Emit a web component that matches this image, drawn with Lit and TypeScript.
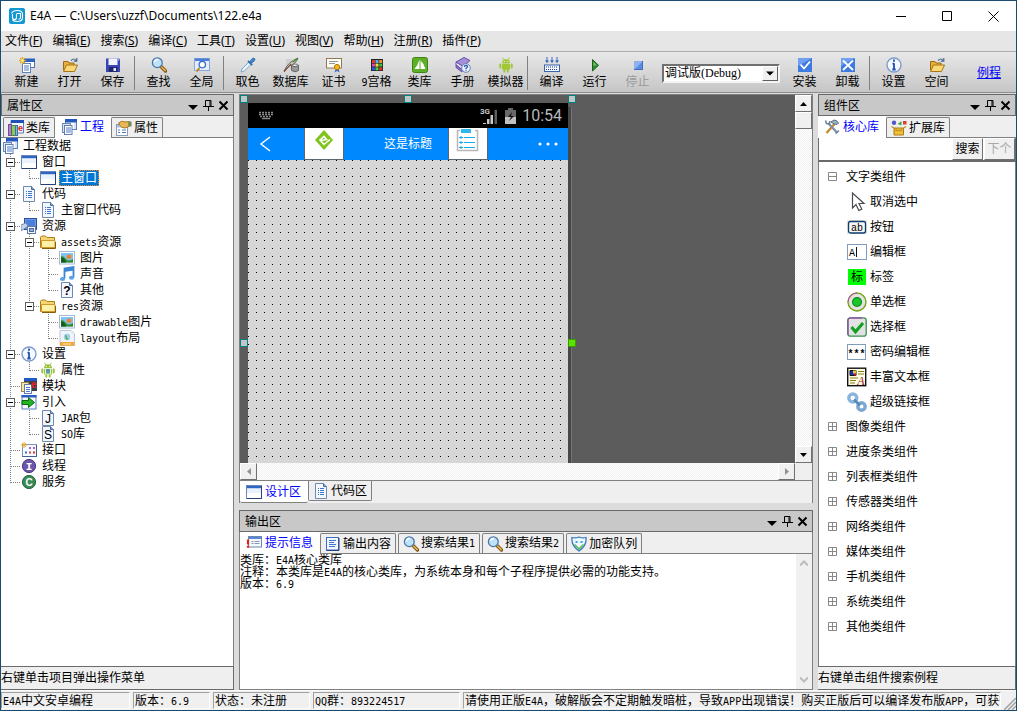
import { LitElement, html, svg, css, nothing, type TemplateResult } from "lit";
import { customElement, property } from "lit/decorators.js";

/* ---------- shared drawing helpers ---------- */

const pageSheet = svg`<path d="M2.500 .5h8l3 3v12h-11z" fill="#f3f8ff" stroke="#7089b0"/><path d="M10.500 .5v3h3" fill="#8fa8d0" stroke="#4c6aa0"/>`;
const windowPane = svg`<rect x=".5" y="1.500" width="15" height="13" fill="#fff" stroke="#6b87b8"/><path d="M1 2h14v2.500H1z" fill="#2f66c4"/><path d="M1 4.500h14V9H1z" fill="#e9f1fd"/><path d="M1 14.500h14.500V2" fill="none" stroke="#27407a"/>`;
const magnifier = svg`<path d="M10 9.500l4.500 4.500" stroke="#7a4a10" stroke-width="3.400" stroke-linecap="round"/><path d="M10.500 10l3.700 3.600" stroke="#e8b850" stroke-width="1.600" stroke-linecap="round"/><circle cx="6.300" cy="5.700" r="4.900" fill="#bfe2fb" stroke="#4a77a8" stroke-width="1.300"/><path d="M3.500 5a3.200 3.200 0 0 1 3.500-2.500" stroke="#fff" stroke-width="1.500" fill="none"/>`;
const folder = svg`<path d="M.5 13.500v-10l1-1.500h4l1.500 1.500h7.500v10z" fill="#f5d571" stroke="#b07c14"/><path d="M1.500 13.500V6.500h13.500v7z" fill="#fff0a8" stroke="#d09a28"/><path d="M2 14.500h13.500V8" fill="none" stroke="#8a5c08"/>`;
const folderOpen = svg`<path d="M1.500 13V4.500h4.500l1 1.500h5v2.500" fill="#e6b040" stroke="#9c6a10"/><path d="M1.500 14.500l3-6.500h11l-3 6.500z" fill="#fbd877" stroke="#a87414"/><path d="M9 3.500q3-3 5 0M14.800 1v3.200h-3" fill="none" stroke="#4a6a94" stroke-width="1.200"/>`;
const infoDisc = svg`<circle cx="8" cy="8" r="7" fill="#f4f8ff" stroke="#7f9cc9" stroke-width="1.400"/><path d="M8 2.600v2.200M8 6.200v6M6.500 6.700H8M6.300 12.500h3.400" stroke="#1d4fb0" stroke-width="1.800" fill="none"/>`;
const projectStack = svg`<rect x="4.500" y=".5" width="11" height="10" fill="#fff" stroke="#5c7fbe"/><path d="M4 0h12v3.500H4z" fill="#2256c0"/><path d="M13 4h2v6h-2z" fill="#d5e2f8"/><rect x="1.500" y="4.500" width="8" height="9" fill="#d8e5fa" stroke="#7089b0"/><rect x="3.500" y="6.500" width="7.500" height="9" fill="#fff" stroke="#5f7db0"/><path d="M5 9h5M5 11h5M5 13h5" stroke="#4d79cc"/>`;
const picture = svg`<rect x=".5" y="1.500" width="15" height="12.500" fill="#fff" stroke="#a5b9d6"/><path d="M2 3h12v9.500H2z" fill="#7fc4ef"/><path d="M2 6q3 0 5 3t7 0v3.500H2z" fill="#2e8b30"/><path d="M2 8q3-1 5 4.500H2z" fill="#175a20"/><circle cx="10" cy="6.800" r="2.400" fill="#f08030"/>`;
const droid = (body: string) => svg`<path d="M4 6.200a4 4 0 0 1 8 0z" fill="${body}"/><path d="M4.500 .8l1.500 2M11.500 .8l-1.500 2" stroke="${body}"/><rect x="4" y="6.800" width="8" height="6" rx=".8" fill="${body}"/><rect x="1.300" y="6.500" width="2" height="5" rx="1" fill="${body}"/><rect x="12.700" y="6.500" width="2" height="5" rx="1" fill="${body}"/><path d="M6.300 12v3.500M9.700 12v3.500" stroke="${body}" stroke-width="1.900"/><circle cx="6.300" cy="4.500" r=".6" fill="#fff"/><circle cx="9.700" cy="4.500" r=".6" fill="#fff"/>`;
const docLines = svg`${pageSheet}<path d="M5 5.500h1M7 5.500h4M5 7.500h1M7 7.500h4M5 9.500h1M7 9.500h4M5 11.500h1M7 11.500h4" stroke="#3f74cf"/>`;

const icons: Record<string, TemplateResult | ReturnType<typeof svg>> = {
  newFile: svg`<rect x="5.500" y="2.500" width="10" height="8" fill="#fff" stroke="#4c74b8"/><path d="M5 1.500h11V5H5z" fill="#2c62c0"/><rect x="3.500" y="6.500" width="8" height="9" fill="#fff" stroke="#5f82bd"/><path d="M5 9h5M5 11h5M5 13h5" stroke="#4d79cc"/><path d="M3.500 0v7M0 3.500h7M1 1l5 5M6 1L1 6" stroke="#e8a820" stroke-width="1.100"/><circle cx="3.500" cy="3.500" r="1.300" fill="#fff4a0"/>`,
  open: folderOpen,
  save: svg`<path d="M1 1.500h13l1 1v12.500H1z" fill="#3a46b8"/><path d="M3.500 1.500h9V8h-9z" fill="#f2f5ff"/><path d="M12.500 1.500h1.500V4h-1.500z" fill="#8fa0f0"/><path d="M4 10h8.500v5H4z" fill="#20266e"/><path d="M8.500 11h2.500v3H8.500z" fill="#e8ecff"/>`,
  find: magnifier,
  global: svg`<rect x=".5" y="1.500" width="15" height="12" fill="#e3edfc" stroke="#88a6dc"/><path d="M1 1.500h14V4H1z" fill="#4b7fd6"/><path d="M5.500 11l-3 3.500" stroke="#c08830" stroke-width="2"/><circle cx="8.300" cy="7.600" r="3.200" fill="#fff" stroke="#3a6cc4" stroke-width="1.300"/>`,
  pick: svg`<path d="M1 15l1-3 7-7 2.200 2.200-7 7z" fill="#e8f4ff" stroke="#7fa4c4"/><path d="M8 4l4.200 4.200" stroke="#2f6ea8" stroke-width="1.800"/><path d="M10 4.500L12 2q1.500-1.500 2.500-.5t-.5 2.500L11.800 6z" fill="#3f8fd8" stroke="#2868a8"/>`,
  database: svg`<path d="M3 2h6v10H3z" fill="#d0d0d0"/><ellipse cx="12" cy="8.500" rx="3.500" ry="1.500" fill="#eee" stroke="#777"/><path d="M8.500 8.500v5q3.500 2.500 7 0v-5q-3.500 2.500-7 0z" fill="#999" stroke="#666"/><path d="M1 14Q5 5 15 1q-2 6-9 8z" fill="#c9c3b4" stroke="#66645c"/><path d="M1 15l7-8" stroke="#8a3020"/><path d="M10 5l4-3" stroke="#3f9a3a" stroke-width="1.500"/>`,
  cert: svg`<rect x=".5" y="1.500" width="15" height="9.500" fill="#fffdf4" stroke="#8f7a58"/><path d="M3 4.500h9M3 6.500h6" stroke="#9098a8"/><path d="M10 11l-1.500 4.500L11 14l2.500 1.500L12.500 11z" fill="#3a6cc8"/><circle cx="11" cy="10" r="2.600" fill="#f8b820" stroke="#b87808"/>`,
  grid9: svg`<path d="M2 2h12v12H2z" fill="#222"/><path d="M3 3h3v3H3z" fill="#f03020"/><path d="M6.500 3h3v3h-3z" fill="#40b8f0"/><path d="M10.200 3h3v3h-3z" fill="#f09020"/><path d="M3 6.600h3v3H3z" fill="#e040c0"/><path d="M6.500 6.600h3v3h-3z" fill="#f0e030"/><path d="M10.200 6.600h3v3h-3z" fill="#38c040"/><path d="M3 10.300h3v3H3z" fill="#3050e0"/><path d="M6.500 10.300h3v3h-3z" fill="#48d048"/><path d="M10.200 10.300h3v3h-3z" fill="#e03030"/>`,
  classLib: svg`<rect x=".5" y=".5" width="15" height="15" rx="2" fill="#5fae28" stroke="#3e8412"/><path d="M7.500 2.500v9.500H2.500q3.500-4 5-9.500zM8.500 3.500q3.500 3 5 8.500h-5z" fill="#fff"/>`,
  manual: svg`<path d="M1 5l8-4.500 6 3-7 6z" fill="#a48fd8" stroke="#6650a8"/><path d="M1 5v3l6 4.500 1-3z" fill="#e8e2f8" stroke="#6650a8"/><path d="M1 8v2.500L7 15v-2.500z" fill="#8a74c8" stroke="#6650a8"/><circle cx="11" cy="11" r="4.300" fill="#eaf2ff" stroke="#6a86b8"/><path d="M9.500 10q0-1.700 1.500-1.700t1.500 1.300q0 1-1.500 1.700v.7M11 12.800v1" stroke="#2b57ad" stroke-width="1.300" fill="none"/>`,
  droid: droid("#a0c836"),
  compile: svg`<path d="M3 0v5M8 0v5M13 0v5" stroke="#3a6cc8"/><path d="M1 3.500h4L3 6zM6 3.500h4L8 6zM11 3.500h4L13 6z" fill="#2c5cb8"/><rect x=".5" y="8" width="15" height="6.500" fill="#f4f7ff" stroke="#3a62aa"/><path d="M2 10h12M2 12.500h12" stroke="#27457e" stroke-dasharray="1 1"/>`,
  run: svg`<path d="M5.500 2.500v11.500l6-5.700z" fill="#2e8a2c" stroke="#1c641c"/><path d="M6.500 5v4l3-1z" fill="#79c878"/>`,
  stop: svg`<path d="M4 4h9v9H4z" fill="#5a8ce0"/><path d="M4 4h9L4 13z" fill="#8db2f2"/><path d="M4 12.500h8.500V4" stroke="#3f6cc0" fill="none"/>`,
  install: svg`<rect x="1" y="1" width="14" height="14" fill="#3f7ae0"/><path d="M1 1h14L1 9z" fill="#72a0f0"/><path d="M3.500 7.500l3.500 4 6-7" stroke="#fff" stroke-width="1.800" fill="none"/>`,
  uninstall: svg`<rect x="1" y="1" width="14" height="14" fill="#3f7ae0"/><path d="M1 1h14L1 9z" fill="#72a0f0"/><path d="M3 3.500l10 9.500M13 3.500L3 13" stroke="#fff" stroke-width="1.800"/>`,
  info: infoDisc,
  libTab: svg`<path d="M3 .5h12.500V13H3z" fill="#f4f8ff" stroke="#5c7fbe"/><path d="M3 0h13v3H3z" fill="#1f50b8"/><rect x=".5" y="4.500" width="3" height="11" fill="#b47adc" stroke="#774aa0"/><rect x="3.500" y="5.500" width="4" height="10" rx="1" fill="#8cc860" stroke="#3d7a28"/><rect x="7.500" y="5.500" width="2" height="10" fill="#88b8e8" stroke="#44709e"/><text x="10" y="10.500" font-size="9" font-weight="bold" fill="#e02020">e</text>`,
  project: projectStack,
  propTab: svg`<rect x=".5" y="4.500" width="11" height="11" fill="#fff" stroke="#8a9cbc"/><path d="M1 5h10v2.500H1z" fill="#a9c0e4"/><path d="M2 10h2M6 10h4M2 12.500h2M6 12.500h4" stroke="#5078c0"/><path d="M2.500 3Q6 0 9 2l4-.5v5L9 8Q5 8 4 5.500z" fill="#e8b858" stroke="#a8781a"/><path d="M12.500 1.500h3v5h-3z" fill="#6a8a58"/>`,
  window: windowPane,
  doc: docLines,
  resources: svg`<rect x="3.500" y=".5" width="12" height="11" fill="#6a9ae8" stroke="#2a4fa0"/><path d="M5 2h9v6H5z" fill="#4a80dc"/><path d="M0 13V7l5-2 2 3z" fill="#c9d6ea" stroke="#7088b0"/><rect x="6.500" y="8.500" width="8" height="7" fill="#f4f7fc" stroke="#607aa8"/><rect x="8.500" y="10.500" width="4" height="3" fill="#8fb0e0" stroke="#4a68a0"/>`,
  folder,
  picture,
  music: svg`<path d="M5.500 12.500V2.500l9-1.500v10.500" fill="none" stroke="#3a86d4" stroke-width="1.800"/><path d="M5 2h10v2.500L5 6z" fill="#3a86d4"/><ellipse cx="3.500" cy="13" rx="2.600" ry="2" fill="#56a4ec"/><ellipse cx="12.500" cy="11.800" rx="2.600" ry="2" fill="#56a4ec"/>`,
  other: svg`${pageSheet}<text x="8" y="13" font-size="12" font-weight="bold" text-anchor="middle">?</text>`,
  layout: svg`<path d="M1 .5h11l3.500 3.500v11.500H1z" fill="#eef4fa" stroke="#b8c8d8"/><circle cx="8" cy="7" r="3.200" fill="#9cd0e8"/><path d="M6 5.500q2-1 2 1.500t2 1.500q-1 2-3 1z" fill="#58b060"/><path d="M1 12h14.500v3.800H1z" fill="#f0a838"/><path d="M4 14h8" stroke="#ffe8b8"/>`,
  droidGear: svg`${droid("#9ac23c")}<rect x="5.500" y="6.500" width="5" height="5.500" fill="#5a9ab0" stroke="#e8f4c8"/>`,
  module: svg`<path d="M3 .5h13V13H3z" fill="#3a3f4a"/><path d="M3 0h13v3H3z" fill="#2458c8"/><rect x=".5" y="4.500" width="7" height="9" fill="#f7e4b8" stroke="#a88a50"/><rect x="3.500" y="6.500" width="7" height="9" fill="#fff" stroke="#5f7db0"/><path d="M5 9.500h4M5 11.500h4M5 13.500h4" stroke="#4d79cc"/><text x="10" y="9.500" font-size="10" font-weight="bold" fill="#f02020">e</text>`,
  importIn: svg`<rect x="1" y="1.500" width="14" height="13.500" fill="#f4f8ff" stroke="#5c7fbe"/><path d="M.5 1h15v2.500H.5z" fill="#2a5cc4"/><path d="M1 6.500h6.500V3.500L13.500 8.500 7.500 13.500V10.500H1z" fill="#22b422" stroke="#0c6c0c"/>`,
  jar: svg`${pageSheet}<text x="8" y="12.500" font-size="12" text-anchor="middle">J</text>`,
  so: svg`${pageSheet}<text x="8" y="12.500" font-size="12" text-anchor="middle">S</text>`,
  iface: svg`<rect x="1.500" y="2.500" width="14" height="12" fill="#f6f9ff" stroke="#7a93c0"/><path d="M1.500 14.500h14V3" fill="none" stroke="#3f5c94"/><path d="M8 5h2v2H8zM12 5h2v2h-2z" fill="#b060d0"/><path d="M4 9.500h2v2H4z" fill="#3070d8"/><path d="M8 9.500h2v2H8z" fill="#e04040"/><path d="M12 9.500h2v2h-2z" fill="#d83030"/><path d="M3 0v6M0 3h6M1 1l4 4M5 1L1 5" stroke="#e8b030"/>`,
  thread: svg`<circle cx="8" cy="8" r="6.600" fill="#6a55a8" stroke="#4a3888"/><text class="slab" x="8" y="12" font-size="11" font-weight="bold" text-anchor="middle" fill="#fff">I</text>`,
  service: svg`<circle cx="8" cy="8" r="6.600" fill="#3a8a58" stroke="#256840"/><text x="8" y="11.500" font-size="10" font-weight="bold" text-anchor="middle" fill="#fff">C</text>`,
  hint: svg`<rect x="2.500" y="1.500" width="13" height="10.500" fill="#f4f8ff" stroke="#6f86ae"/><path d="M3 2h12v2H3z" fill="#5a88d8"/><path d="M5.500 6.500h2M8.500 6.500h5M5.500 8.500h2M8.500 8.500h5" stroke="#8898b8"/><path d="M2 4.500v5M2 10.800v2" stroke="#e02010" stroke-width="2.200"/>`,
  output: svg`<rect x="1.500" y="1.500" width="12" height="12.500" fill="#f2f7ff" stroke="#3f6cc0"/><path d="M1.500 14.500h12.500V2" fill="none" stroke="#27407a"/><path d="M4 4.500h7M4 6.500h5M4 8.500h7M4 10.500h6" stroke="#3d74d0"/>`,
  shield: svg`<path d="M8 1q3.500 1.500 7 .5 1 8-7 13.500Q0 9.500 1 1.500 4.500 2.500 8 1z" fill="#eef8ff" stroke="#3a78c0" stroke-width="1.300"/><path d="M3.500 8.500L8 13l4.500-4.500" fill="none" stroke="#58b860" stroke-width="1.600"/><path d="M4.500 6h2M9.500 6h2" stroke="#3aa0d8" stroke-width="2"/>`,
  tools: svg`<path d="M2.500 14l8-9" stroke="#c88a30" stroke-width="2.400"/><path d="M7 3l3-2q3 0 4.500 3l-1.500 1.500L10 5z" fill="#9fb0c0" stroke="#56687c"/><path d="M4 4l9.500 10" stroke="#7c92a8" stroke-width="2.300"/><path d="M1.500 1.500l1 3 3 .5.500-3M15 11.500l-3.500 3" stroke="#6c8298" stroke-width="1.500" fill="none"/>`,
  extLib: svg`<circle cx="3" cy="2.800" r="2.200" fill="#5058d0"/><path d="M10.500 1L6.500 4l4 1.500z" fill="#40a850"/><path d="M12 1h3.500v3.500H12z" fill="#d84030"/><path d="M3 8h9.500v7H3z" fill="#f0c038" stroke="#a87c10"/><path d="M3 8L.5 6.500M12.500 8L15 6.500M5 8v2.500h5.500V8" fill="none" stroke="#c89420" stroke-width="1.400"/>`,
};

/* Component palette glyphs, drawn on a 20 unit box */
const paletteIcons: Record<string, ReturnType<typeof svg>> = {
  cursor: svg`<path d="M5.500 1v15l3.500-3.500 2.800 6 3-1.400-2.800-5.600H17z" fill="#fff" stroke="#4a4a55" stroke-width="1.200"/>`,
  button: svg`<rect x="0" y="3" width="20" height="14" fill="#ebe6d6"/><rect x="1.500" y="4.500" width="17" height="11.500" rx="2" fill="#f6f6f2" stroke="#0c3c74" stroke-width="1.300"/><text class="slab" x="10" y="14" font-size="10" text-anchor="middle">ab</text>`,
  edit: svg`<rect x=".5" y="2.500" width="19" height="15" fill="#fff" stroke="#7f9db9"/><text class="slab" x="2" y="14" font-size="10">A</text><path d="M9.500 5v10" stroke="#111"/>`,
  radio: svg`<circle cx="10" cy="10" r="9" fill="#e4e2e0" stroke="#72a818" stroke-width="1.400"/><path d="M10 1a9 9 0 0 0-9 9" fill="none" stroke="#d040b8"/><circle cx="10" cy="10" r="5" fill="#0a8c1e"/><circle cx="10" cy="10" r="3.800" fill="#18c828"/>`,
  check: svg`<rect x=".8" y=".8" width="18.400" height="18.400" rx="2.500" fill="#e2e2e2" stroke="#389050" stroke-width="1.300"/><path d="M1 18V3q0-2 2-2h12" fill="none" stroke="#a030b8"/><path d="M4.500 10l4 4.800L16 6" stroke="#10a020" stroke-width="3" fill="none"/>`,
  password: svg`<rect x=".5" y="2.500" width="18" height="15" fill="#fff" stroke="#7f9db9"/><text class="slab" x="9.500" y="15" font-size="10" font-weight="bold" text-anchor="middle">***</text>`,
  rich: svg`<rect x=".7" y="1.200" width="18" height="17.500" fill="#fffde8" stroke="#111" stroke-width="1.400"/><path d="M3 3.500h6v5H3z" fill="#1830c8" stroke="#111"/><path d="M6 3.500h3v3H6z" fill="#f0d020"/><path d="M7 6.500h2v2H7z" fill="#e02020"/><path d="M11 4.500h6M11 7h6M3 11h8M3 13.500h6M3 16h5" stroke="#8a7a18" stroke-width="1.200"/><text class="serif" x="14" y="17.500" font-size="12" font-style="italic" text-anchor="middle" fill="#a01818">A</text>`,
  link: svg`<circle cx="5.800" cy="6" r="4" fill="none" stroke="#8ab4dc" stroke-width="3.400"/><circle cx="14.500" cy="14.500" r="3.700" fill="none" stroke="#7aa8d4" stroke-width="3.400"/><path d="M7 7.500l6 6" stroke="#5c88b8" stroke-width="2.600"/>`,
};

const glyph = (name: string) => html`<svg class="ic" viewBox="0 0 16 16" aria-hidden="true">${icons[name]}</svg>`;

/* Latin runs are set in a half-width mono face beside the full-width Chinese. */
const mix = (text: string) =>
  html`<span class="mix">${text.split(/([\x20-\x7e]+)/).map((run) =>
    /^[\x20-\x7e]+$/.test(run) ? html`<span class="lat">${run}</span>` : run
  )}</span>`;

const base = css`
  *, *::before, *::after { box-sizing: border-box; }
  :host { box-sizing: border-box; font: 12px/16px "Liberation Sans", "Noto Sans CJK SC", sans-serif; color: #000; }
  button { font: inherit; color: inherit; margin: 0; padding: 0; border: 0; background: none; border-radius: 0; }
  svg { display: block; flex: none; }
  .ic { width: 16px; height: 16px; }
  .slab { font-family: "Liberation Mono", monospace; }
  .serif { font-family: "Liberation Serif", serif; }
  .mix { white-space: pre; }
  .lat { font-family: "DejaVu Sans Mono", monospace; font-size: 10px; }
`;

const tabStyles = css`
  .tabs { display: flex; align-items: flex-end; height: 22px; flex: none; background: #efefef; box-shadow: inset 0 -1px #808080; }
  .tab { display: flex; align-items: center; gap: 2px; height: 20px; margin-bottom: 1px; padding: 0 4px; background: #efefef; border: 1px solid #808080; border-bottom: 0; border-radius: 2px 2px 0 0; }
  .tab.on { height: 22px; margin-bottom: 0; padding: 0 7px 0 6px; gap: 3px; background: #fff; color: #00f; border: 0; }
  .tabs.spaced .tab:not(.on) { margin-right: 2px; }
`;

/* ---------- panel caption with its menu, pin and close buttons ---------- */

@customElement("panel-caption")
export class PanelCaption extends LitElement {
  @property() heading = "";
  static styles = [base, css`
    :host { display: flex; align-items: center; height: 22px; flex: none; padding: 1px 2px 0 5px; background: #c8c8c8; border: 1px solid #6a6a6a; }
    h2 { flex: 1; margin: 0; font: inherit; }
    .tool { width: 15px; height: 14px; }
  `];
  render() {
    return html`<h2>${this.heading}</h2>
      <button class="tool" aria-label="菜单"><svg width="15" height="14"><path d="M2 6h10L7 11z" fill="#000"/></svg></button>
      <button class="tool" aria-label="固定"><svg width="15" height="14"><path d="M4.500 7V1.500h5.500V7M9 1.500V7M2 7.500h11M7.500 8v4" fill="none" stroke="#000"/></svg></button>
      <button class="tool" aria-label="关闭"><svg width="15" height="14"><path d="M3.500 2.500l8 8M11.500 2.500l-8 8" stroke="#000" stroke-width="2"/></svg></button>`;
  }
}

/* ---------- project tree ---------- */

/* Guide codes per level: v line through, t branch, l last branch, - blank; capitals carry an expander. */
type Node = { guides: string; icon: string; label: string; selected?: boolean };
const projectTree: Node[] = [
  { guides: "", icon: "project", label: "工程数据" },
  { guides: "T", icon: "window", label: "窗口" },
  { guides: "vl", icon: "window", label: "主窗口", selected: true },
  { guides: "T", icon: "doc", label: "代码" },
  { guides: "vl", icon: "doc", label: "主窗口代码" },
  { guides: "T", icon: "resources", label: "资源" },
  { guides: "vT", icon: "folder", label: "assets资源" },
  { guides: "vvt", icon: "picture", label: "图片" },
  { guides: "vvt", icon: "music", label: "声音" },
  { guides: "vvl", icon: "other", label: "其他" },
  { guides: "vL", icon: "folder", label: "res资源" },
  { guides: "v-t", icon: "picture", label: "drawable图片" },
  { guides: "v-l", icon: "layout", label: "layout布局" },
  { guides: "T", icon: "info", label: "设置" },
  { guides: "vl", icon: "droidGear", label: "属性" },
  { guides: "t", icon: "module", label: "模块" },
  { guides: "T", icon: "importIn", label: "引入" },
  { guides: "vt", icon: "jar", label: "JAR包" },
  { guides: "vl", icon: "so", label: "SO库" },
  { guides: "t", icon: "iface", label: "接口" },
  { guides: "t", icon: "thread", label: "线程" },
  { guides: "l", icon: "service", label: "服务" },
];

@customElement("project-panel")
export class ProjectPanel extends LitElement {
  static styles = [base, tabStyles, css`
    :host { display: flex; flex-direction: column; min-height: 0; }
    .tabs { padding-left: 2px; border-right: 1px solid #808080; }
    .tree { flex: 1; min-height: 0; overflow: hidden; margin: 0; padding: 0; list-style: none; background: #fff; border-right: 1px solid #808080; }
    .row { display: flex; align-items: center; height: 16px; }
    .row .ic { margin: 0 3px 0 1px; }
    .label { height: 16px; padding: 0 2px; }
    .label.sel { background: #0078d7; color: #fff; outline: 1px dotted #f08a28; outline-offset: -1px; }
    .foot { flex: none; height: 24px; padding: 3px 0; background: #efefef; border: 1px solid #6a6a6a; border-left: 0; }
  `];
  private guide(code: string) {
    const k = code.toLowerCase();
    return html`<svg width="19" height="16" aria-hidden="true">
      ${k === "-" ? nothing : svg`<path d="${k === "l" ? "M9.500 0V9" : "M9.500 0V16"}" stroke="#808080" stroke-dasharray="1 1"/>`}
      ${k === "t" || k === "l" ? svg`<path d="M10 8.500H19" stroke="#808080" stroke-dasharray="1 1"/>` : nothing}
      ${code !== k ? svg`<rect x="5.500" y="4.500" width="8" height="8" fill="#fff" stroke="#606060"/><path d="M7 8.500h5" stroke="#000"/>` : nothing}
    </svg>`;
  }
  render() {
    return html`<panel-caption heading="属性区"></panel-caption>
      <div class="tabs">
        <button class="tab">${glyph("libTab")}类库</button>
        <button class="tab on">${glyph("project")}工程</button>
        <button class="tab">${glyph("propTab")}属性</button>
      </div>
      <ul class="tree">
        ${projectTree.map((n) => html`<li class="row">${[...n.guides].map((g) => this.guide(g))}${glyph(n.icon)}<span class="label ${n.selected ? "sel" : ""}">${mix(n.label)}</span></li>`)}
      </ul>
      <div class="foot">右键单击项目弹出操作菜单</div>`;
  }
}

/* ---------- form designer ---------- */

@customElement("form-designer")
export class FormDesigner extends LitElement {
  static styles = [base, tabStyles, css`
    :host { display: flex; flex-direction: column; min-height: 0; background: #efefef; border: 1px solid #808080; border-bottom: 0; }
    .work { flex: 1; min-height: 0; display: grid; grid-template-columns: minmax(0, 1fr) 17px; grid-template-rows: minmax(0, 1fr) 17px; border-bottom: 1px solid #808080; }
    .canvas { position: relative; overflow: hidden; background: #5c5c5c; padding: 8px 0 0 8px; display: flex; }
    .phone { width: 320px; display: flex; flex-direction: column; background: #d6d6d6; box-shadow: 3px 4px 0 #484848, 4px 4px 0 #747474; }
    .sys { display: flex; align-items: center; height: 25px; flex: none; padding: 0 6px 0 10px; background: #000; color: #b8b8b8; font: 16px/25px Roboto, sans-serif; }
    .sys .kbd { margin-right: auto; }
    .sys .cells { margin-right: 7px; }
    .sys .bat { margin-right: 6px; }
    .bar { display: grid; grid-template-columns: 56px 40px 1fr 40px 80px; align-items: center; height: 32px; flex: none; background: #0088ff; color: #fff; }
    .bar .back { margin-left: 10px; }
    .bar .more { margin-left: 48px; }
    .bar .tile { height: 32px; background: #fff; border: 1px solid #5c6470; border-top: 0; display: flex; justify-content: center; align-items: flex-start; }
    .bar .name { padding-left: 24px; text-align: center; }
    .form { flex: 1; }
    .handle { position: absolute; width: 8px; height: 8px; background: #c4c4c4; border: 1px solid #008080; }
    .h1 { left: 0; top: 0; } .h2 { left: 164px; top: 0; } .h3 { left: 328px; top: 0; }
    .h4 { left: 0; top: 244px; } .h5 { left: 328px; top: 244px; background: #60e000; border-color: #30a000; }
    .sb { display: flex; background: repeating-conic-gradient(#fff 0 25%, #f0f0f0 0 50%) 0 0 / 2px 2px; }
    .sb.v { flex-direction: column; }
    .sb button { width: 17px; height: 17px; flex: none; display: flex; align-items: center; justify-content: center; background: #f0f0f0; border: 1px solid; border-color: #fff #707070 #707070 #fff; }
    .sb .fill { flex: 1; }
    .tabs { align-items: flex-start; box-shadow: none; }
    .tab { margin: 0; border: 1px solid #808080; border-top: 0; border-radius: 0 0 2px 2px; }
    .tab.on { border: 0; border-bottom: 1px solid #808080; }
  `];
  render() {
    return html`<div class="work">
        <div class="canvas">
          <div class="phone">
            <div class="sys">
              <svg class="kbd" width="16" height="10"><path d="M1 1.500h14M1 3.500h14M2 5.500h12" stroke="#8a8a8a" stroke-width="1.500" stroke-dasharray="2 1"/><path d="M4 7.500h8" stroke="#8a8a8a" stroke-width="1.500"/></svg>
              <svg class="cells" width="18" height="20"><text x="0" y="8" font-size="8" font-weight="bold" fill="#c8c8c8">3G</text><path d="M3 18v-1h3v1zM7 18v-5h2.500v5zM10.500 18V9H13v9z" fill="#c8c8c8"/><path d="M14.500 18V4H17v14z" fill="#5c5c5c"/></svg>
              <svg class="bat" width="11" height="16"><path d="M0 2h3V0h5v2h3v14H0z" fill="#686868"/><path d="M0 9h11v7H0z" fill="#c0c0c0"/><path d="M7 4L3 9h3l-2 4 5-5H6z" fill="#111"/></svg>
              <span>10:54</span>
            </div>
            <div class="bar">
              <svg class="back" width="14" height="18"><path d="M12 2L3 9l9 7" fill="none" stroke="#fff" stroke-width="1.500"/></svg>
              <div class="tile"><svg width="22" height="26"><path d="M11 2l9 10-9 10-9-10z" fill="#7fc41c"/><path d="M8 12.500l5.500-1-2.500-3-4 3.500 4 4.500 6-5" fill="none" stroke="#fff" stroke-width="1.600"/></svg></div>
              <div class="name">这是标题</div>
              <div class="tile"><svg width="24" height="26"><path d="M4 2.500H1.500v20h20v-20H19" fill="none" stroke="#b8b8b8" stroke-width="1.500"/><path d="M5 1h10v4H5z" fill="#2cb8ec"/><path d="M3 9.500h4M3 14.500h4M3 19.500h4M8 9.500h11M8 14.500h11M8 19.500h11" stroke="#14aae8" stroke-width="1.200"/><path d="M5 8v3M5 13v3M5 18v3" stroke="#14aae8"/></svg></div>
              <svg class="more" width="24" height="6"><circle cx="4" cy="3" r="1.600" fill="#fff"/><circle cx="12" cy="3" r="1.600" fill="#fff"/><circle cx="20" cy="3" r="1.600" fill="#fff"/></svg>
            </div>
            <svg class="form" width="320" height="100"><defs><pattern id="dots" width="8" height="8" patternUnits="userSpaceOnUse"><path d="M0 0h1v1H0z" fill="#000"/></pattern></defs><rect width="100%" height="100%" fill="url(#dots)"/></svg>
          </div>
          <i class="handle h1"></i><i class="handle h2"></i><i class="handle h3"></i><i class="handle h4"></i><i class="handle h5"></i>
        </div>
        <div class="sb v">
          <button aria-label="向上"><svg width="7" height="4"><path d="M0 4l3.500-4L7 4z"/></svg></button>
          <button aria-label="滑块"></button><span class="fill"></span>
          <button aria-label="向下"><svg width="7" height="4"><path d="M0 0h7L3.500 4z"/></svg></button>
        </div>
        <div class="sb">
          <button aria-label="向左"><svg width="4" height="7"><path d="M4 0v7L0 3.500z" fill="#909090"/></svg></button><span class="fill"></span>
          <button aria-label="向右"><svg width="4" height="7"><path d="M0 0v7l4-3.500z" fill="#909090"/></svg></button>
        </div>
      </div>
      <div class="tabs">
        <button class="tab on">${glyph("window")}设计区</button>
        <button class="tab">${glyph("doc")}代码区</button>
      </div>`;
  }
}

/* ---------- output ---------- */

@customElement("output-panel")
export class OutputPanel extends LitElement {
  static styles = [base, tabStyles, css`
    :host { display: flex; flex-direction: column; min-height: 0; }
    .tabs { border: 0 solid #808080; border-width: 0 1px; }
    .body { flex: 1; min-height: 0; display: flex; background: #fff; border: 1px solid #808080; border-top: 0; }
    output { flex: 1; min-width: 0; overflow: hidden; line-height: 12px; }
    .line { height: 12px; }
    .sb { width: 16px; padding: 6px 4px; display: flex; flex-direction: column; justify-content: space-between; background: #f0f0f0; }
  `];
  render() {
    return html`<panel-caption heading="输出区"></panel-caption>
      <div class="tabs spaced">
        <button class="tab on">${glyph("hint")}提示信息</button>
        <button class="tab">${glyph("output")}输出内容</button>
        <button class="tab">${glyph("find")}${mix("搜索结果1")}</button>
        <button class="tab">${glyph("find")}${mix("搜索结果2")}</button>
        <button class="tab">${glyph("shield")}加密队列</button>
      </div>
      <div class="body">
        <output>
          <div class="line">${mix("类库：E4A核心类库")}</div>
          <div class="line">${mix("注释：本类库是E4A的核心类库，为系统本身和每个子程序提供必需的功能支持。")}</div>
          <div class="line">${mix("版本：6.9")}</div>
        </output>
        <div class="sb">
          <svg width="8" height="6"><path d="M0 5.500l4-4 4 4" fill="none" stroke="#bcbcbc" stroke-width="2"/></svg>
          <svg width="8" height="6"><path d="M0 .5l4 4 4-4" fill="none" stroke="#bcbcbc" stroke-width="2"/></svg>
        </div>
      </div>`;
  }
}

/* ---------- component palette ---------- */

const widgets: [string, string][] = [
  ["cursor", "取消选中"], ["button", "按钮"], ["edit", "编辑框"], ["label", "标签"], ["radio", "单选框"],
  ["check", "选择框"], ["password", "密码编辑框"], ["rich", "丰富文本框"], ["link", "超级链接框"],
];
const groups = ["图像类组件", "进度条类组件", "列表框类组件", "传感器类组件", "网络类组件", "媒体类组件", "手机类组件", "系统类组件", "其他类组件"];

@customElement("palette-panel")
export class PalettePanel extends LitElement {
  static styles = [base, tabStyles, css`
    :host { display: flex; flex-direction: column; min-height: 0; }
    .search { display: flex; gap: 1px; height: 24px; flex: none; background: #fff; border: 1px solid #6a6a6a; border-width: 0 1px 2px; }
    .search input { flex: 1; min-width: 0; border: 0; padding: 0 4px; font: inherit; outline: 0; }
    .search button { width: 31px; background: #f0f0f0; border: 1px solid; border-color: #fff #707070 #707070 #fff; }
    .search button:disabled { color: #a8a8a8; }
    .list { flex: 1; min-height: 0; overflow: hidden; margin: 0; padding: 2px 0 0 9px; list-style: none; background: #fff; border: 1px solid #808080; border-width: 0 1px; }
    .row { display: flex; align-items: center; height: 25px; }
    .row svg.box { margin-right: 9px; }
    .item { padding-left: 19px; gap: 3px; }
    .tag { width: 20px; height: 16px; flex: none; background: #0f0; border: 0 solid #fff; border-width: 0 1px; text-align: center; }
    .foot { flex: none; height: 24px; padding: 3px 0; background: #efefef; border: 1px solid #6a6a6a; border-width: 1px 1px 1px 0; }
  `];
  private box(open: boolean) {
    return html`<svg class="box" width="9" height="9"><path d="M.5 .5h8v8h-8zM.5 4.500h8${open ? "" : "M4.500 .5v8"}" fill="#fff" stroke="#888"/></svg>`;
  }
  render() {
    return html`<panel-caption heading="组件区"></panel-caption>
      <div class="tabs">
        <button class="tab on">${glyph("tools")}核心库</button>
        <button class="tab">${glyph("extLib")}扩展库</button>
      </div>
      <div class="search"><input aria-label="搜索组件" /><button>搜索</button><button disabled>下个</button></div>
      <ul class="list">
        <li class="row">${this.box(true)}文字类组件</li>
        ${widgets.map(([k, t]) => html`<li class="row item">${k === "label"
          ? html`<span class="tag">标</span>`
          : html`<svg width="20" height="20" viewBox="0 0 20 20">${paletteIcons[k]}</svg>`}${t}</li>`)}
        ${groups.map((g) => html`<li class="row">${this.box(false)}${g}</li>`)}
      </ul>
      <div class="foot">右键单击组件搜索例程</div>`;
  }
}

/* ---------- application frame ---------- */

const menus: [string, string][] = [["文件", "F"], ["编辑", "E"], ["搜索", "S"], ["编译", "C"], ["工具", "T"], ["设置", "U"], ["视图", "V"], ["帮助", "H"], ["注册", "R"], ["插件", "P"]];
const toolsMain: ([string, string] | null)[] = [
  ["newFile", "新建"], ["open", "打开"], ["save", "保存"], null,
  ["find", "查找"], ["global", "全局"], null,
  ["pick", "取色"], ["database", "数据库"], ["cert", "证书"], ["grid9", "9宫格"], ["classLib", "类库"], ["manual", "手册"], ["droid", "模拟器"], null,
  ["compile", "编译"], ["run", "运行"], ["stop", "停止"],
];
const toolsEnd: ([string, string] | null)[] = [["install", "安装"], ["uninstall", "卸载"], null, ["info", "设置"], ["open", "空间"]];

@customElement("app-root")
export class AppRoot extends LitElement {
  static styles = [base, css`
    :host { display: flex; flex-direction: column; height: 100vh; min-height: 600px; overflow: hidden; background: #dcdcdc; border: 1px solid #1b4b70; }
    .title { display: flex; align-items: center; height: 30px; flex: none; padding-left: 8px; background: #fff; }
    .title h1 { flex: 1; margin: 0 0 0 5px; font: 12px/16px "Noto Sans", "Open Sans", sans-serif; }
    .title button { width: 46px; height: 30px; display: flex; align-items: center; justify-content: center; }
    .menu { display: flex; gap: 10px; height: 21px; flex: none; padding: 0 4px; background: #e6e6e6; border-bottom: 1px solid #adadad; font-family: "Noto Sans", "Noto Sans CJK SC", sans-serif; }
    .bar { display: flex; align-items: center; height: 40px; flex: none; padding: 2px 0 0 4px; background: linear-gradient(#e8e8e8, #c6c6c6); }
    .tool { width: 43px; height: 36px; flex: none; display: flex; flex-direction: column; align-items: center; gap: 1px; padding-top: 2px; }
    .tool:disabled { color: #9a9a9a; }
    .sep { width: 3px; height: 34px; flex: none; border-left: 1px solid #808080; }
    .combo { position: relative; width: 118px; height: 19px; margin: 0 3px; background: #fff; border: 2px solid; border-color: #707070 #f4f4f4 #f4f4f4 #707070; }
    .combo select { appearance: none; display: block; width: 100%; height: 15px; padding: 0 18px 0 1px; border: 0; border-radius: 0; background: #fff; color: #000; font: 12px/15px "Liberation Serif", "Noto Sans CJK SC", serif; }
    .combo .drop { position: absolute; right: 0; top: 0; width: 16px; height: 15px; padding: 4px 3px; background: #f0f0f0; border: 1px solid; border-color: #fff #606060 #606060 #fff; pointer-events: none; }
    .bar a { margin-left: 19px; color: #00f; }
    .main { flex: 1; min-height: 0; display: grid; grid-template-columns: 233px minmax(0, 1fr) 198px; column-gap: 5px; border-top: 1px solid #8c8c8c; padding-top: 1px; }
    .mid { min-height: 0; display: grid; grid-template-rows: minmax(0, 1fr) 180px; row-gap: 7px; }
    .status { display: flex; gap: 3px; height: 20px; flex: none; padding-top: 1px; background: #f0f0f0; border-top: 1px solid #fafafa; }
    .cell { height: 17px; flex: none; padding: 0 1px; overflow: hidden; white-space: nowrap; border: 1px solid; border-color: #a0a0a0 #fff #fff #a0a0a0; }
    .c1 { width: 129px; } .c2 { width: 77px; } .c3 { width: 97px; } .c4 { width: 147px; }
    .msg { flex: 1; min-width: 0; }
    .grip { align-self: flex-end; }
  `];
  private tool(t: [string, string] | null) {
    return t === null
      ? html`<span class="sep"></span>`
      : html`<button class="tool" ?disabled=${t[0] === "stop"}>${glyph(t[0])}${mix(t[1])}</button>`;
  }
  render() {
    return html`
      <header class="title">
        <svg width="16" height="16" viewBox="0 0 16 16"><rect width="16" height="16" rx="2" fill="#1098d4"/><path d="M2.500 5.500Q4 2.500 8 2.500q5 0 5.500 3v4q0 4-5 4-3.500 0-5-1.500M3.500 6v3.500q0 2 2 2t2-2V6M7.500 5.500h4v4q0 1.500-2 2" fill="none" stroke="#fff" stroke-width="1.100"/></svg>
        <h1>E4A — C:\\Users\\uzzf\\Documents\\122.e4a</h1>
        <button aria-label="最小化"><svg width="10" height="10"><path d="M0 5.500h10" stroke="#000"/></svg></button>
        <button aria-label="最大化"><svg width="10" height="10"><path d="M.5 .5h9v9h-9z" fill="none" stroke="#000"/></svg></button>
        <button aria-label="关闭"><svg width="11" height="11"><path d="M.5 .5l10 10M10.500 .5l-10 10" stroke="#000"/></svg></button>
      </header>
      <nav class="menu">${menus.map(([t, k]) => html`<button>${t}(<u>${k}</u>)</button>`)}</nav>
      <div class="bar">
        ${toolsMain.map((t) => this.tool(t))}
        <label class="combo"><select aria-label="编译版本"><option>调试版(Debug)</option></select><svg class="drop" viewBox="0 0 8 4"><path d="M0 0h8L4 4z"/></svg></label>
        ${toolsEnd.map((t) => this.tool(t))}
        <a href="#samples">例程</a>
      </div>
      <main class="main">
        <project-panel></project-panel>
        <div class="mid"><form-designer></form-designer><output-panel></output-panel></div>
        <palette-panel></palette-panel>
      </main>
      <footer class="status">
        <span class="cell c1">${mix("E4A中文安卓编程")}</span>
        <span class="cell c2">${mix("版本：6.9")}</span>
        <span class="cell c3">${mix("状态：未注册")}</span>
        <span class="cell c4">${mix("QQ群：893224517")}</span>
        <span class="cell msg">${mix("请使用正版E4A，破解版会不定期触发暗桩，导致APP出现错误！购买正版后可以编译发布版APP，可获得")}</span>
        <svg class="grip" width="12" height="13"><path d="M0 13L12 1M4 13l8-8M8 13l4-4" stroke="#a0a0a0" stroke-width="1.500"/></svg>
      </footer>`;
  }
}
